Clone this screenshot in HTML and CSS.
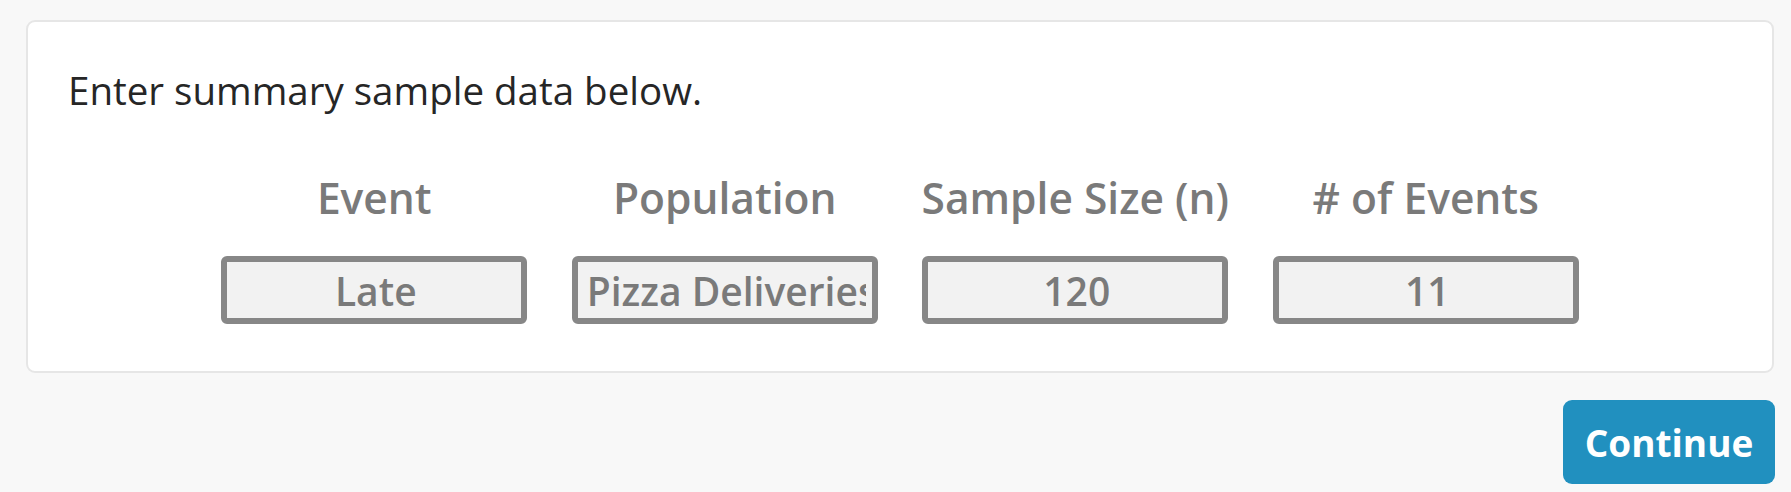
FILE: index.html
```html
<!DOCTYPE html>
<html lang="en">
<head>
<meta charset="utf-8">
<title>Summary sample data</title>
<link rel="stylesheet" href="styles.css">
</head>
<body>
<div class="page">
  <section class="card">
    <p class="intro">Enter summary sample data below.</p>
    <div class="fields">
      <div class="field">
        <label class="field-label" for="f-event">Event</label>
        <input class="field-input" id="f-event" type="text" value="Late" readonly>
      </div>
      <div class="field">
        <label class="field-label" for="f-pop">Population</label>
        <input class="field-input field-input-left" id="f-pop" type="text" value="Pizza Deliveries" readonly>
      </div>
      <div class="field">
        <label class="field-label" for="f-n">Sample Size (n)</label>
        <input class="field-input" id="f-n" type="text" value="120" readonly>
      </div>
      <div class="field">
        <label class="field-label" for="f-x"># of Events</label>
        <input class="field-input" id="f-x" type="text" value="11" readonly>
      </div>
    </div>
  </section>
  <div class="actions">
    <button class="btn-continue" type="button">Continue</button>
  </div>
</div>
</body>
</html>
```
FILE: styles.css
```css
html, body {
  margin: 0;
  padding: 0;
  background: #f8f8f8;
}
body {
  font-family: "Open Sans", "Noto Sans", sans-serif;
  width: 1791px;
  height: 492px;
  overflow: hidden;
}
.page {
  padding: 20px 17px 0 26px;
}
.card {
  background: #ffffff;
  border: 2px solid #e6e6e6;
  border-radius: 9px;
  padding: 42px 42px 46px 40px;
  height: 353px;
  box-sizing: border-box;
}
.intro {
  margin: 0;
  font-size: 38.5px;
  color: #262626;
  line-height: 52px;
}
.fields {
  display: grid;
  grid-template-columns: repeat(4, 306px);
  column-gap: 44.5px;
  justify-content: center;
  margin-top: 54px;
  margin-left: 2px;
}
.field {
  display: flex;
  flex-direction: column;
  align-items: center;
}
.field-label {
  font-size: 42.5px;
  font-weight: 600;
  color: #7a7a7a;
  line-height: 56px;
  white-space: nowrap;
}
.field-input {
  margin-top: 30px;
  width: 306px;
  height: 68px;
  box-sizing: border-box;
  border: 6px solid #878787;
  border-radius: 6px;
  background: #f2f2f2;
  color: #7a7a7a;
  font-family: "Open Sans", "Noto Sans", sans-serif;
  font-size: 39px;
  font-weight: 600;
  text-align: center;
  padding: 0 6px 0 9px;
  outline: none;
}
.field-input-left {
  text-align: left;
}
.actions {
  display: flex;
  justify-content: flex-end;
  margin-top: 27px;
  margin-right: -1px;
}
.btn-continue {
  width: 212px;
  height: 84px;
  border: none;
  border-radius: 9px;
  background: #2190bf;
  color: #ffffff;
  font-family: "Open Sans", "Noto Sans", sans-serif;
  font-size: 37px;
  font-weight: 700;
  padding: 0;
  cursor: pointer;
}
```
